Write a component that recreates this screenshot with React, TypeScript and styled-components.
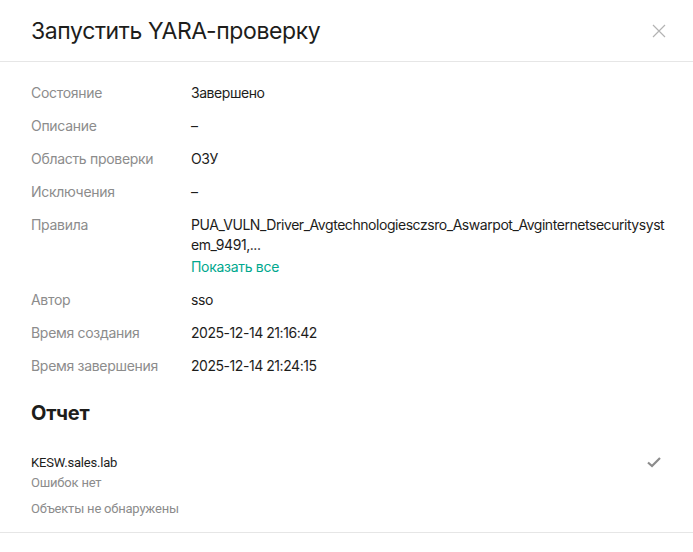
import React from "react";
import styled, { createGlobalStyle } from "styled-components";

const GlobalStyle = createGlobalStyle`
  html, body {
    margin: 0;
    padding: 0;
    background: #fff;
  }
  body {
    font-family: Inter, "Noto Sans", sans-serif;
    color: #1d1d1b;
  }
`;

const Panel = styled.div`
  width: 693px;
  height: 552px;
  background: #fff;
  display: flex;
  flex-direction: column;
  overflow: hidden;
`;

const Header = styled.div`
  height: 62px;
  box-sizing: border-box;
  display: flex;
  align-items: center;
  justify-content: space-between;
  padding: 0 26px 0 31px;
  border-bottom: 1px solid #e6e6e6;
`;

const Title = styled.h1`
  margin: 0;
  font-family: Inter, sans-serif;
  font-weight: 400;
  font-size: 23px;
  letter-spacing: -0.4px;
  color: #1d1d1b;
`;

const CloseButton = styled.button`
  border: 0;
  background: none;
  padding: 0;
  width: 16px;
  height: 16px;
  display: flex;
  cursor: pointer;
`;

const Body = styled.div`
  padding: 21px 28px 0 31px;
  display: flex;
  flex-direction: column;
`;

const Props = styled.div`
  display: grid;
  grid-template-columns: 160px 1fr;
  row-gap: 13px;
  font-size: 14px;
  line-height: 20px;
  letter-spacing: -0.3px;
`;

const Label = styled.div`
  color: #8c8c8c;
`;

const Value = styled.div`
  color: #1d1d1b;
  word-break: break-all;
  letter-spacing: -0.45px;
`;

const Link = styled.a`
  display: block;
  color: #00a88e;
  text-decoration: none;
  margin-top: 2px;
  letter-spacing: -0.3px;
  cursor: pointer;
`;

const SectionTitle = styled.h2`
  margin: 23px 0 0 0;
  font-size: 20px;
  line-height: 28px;
  font-weight: 700;
  letter-spacing: -0.2px;
  color: #1d1d1b;
`;

const Report = styled.div`
  margin-top: 26px;
  display: flex;
  flex-direction: column;
  font-family: Roboto, sans-serif;
  font-size: 13px;
  letter-spacing: -0.2px;
`;

const ReportHead = styled.div`
  display: flex;
  justify-content: space-between;
  align-items: center;
  height: 18px;
  padding-right: 3px;
`;

const Host = styled.div`
  color: #1d1d1b;
`;

const Note = styled.div<{ $gap: number }>`
  color: #8c8c8c;
  margin-top: ${(p) => p.$gap}px;
  line-height: 18px;
`;

const Divider = styled.div`
  margin-top: 14px;
  border-bottom: 1px solid #e6e6e6;
`;

const rows: { label: string; value: string; link?: boolean }[] = [
  { label: "Состояние", value: "Завершено" },
  { label: "Описание", value: "–" },
  { label: "Область проверки", value: "ОЗУ" },
  { label: "Исключения", value: "–" },
  {
    label: "Правила",
    value:
      "PUA_VULN_Driver_Avgtechnologiesczsro_Aswarpot_Avginternetsecuritysystem_9491,...",
    link: true,
  },
  { label: "Автор", value: "sso" },
  { label: "Время создания", value: "2025-12-14 21:16:42" },
  { label: "Время завершения", value: "2025-12-14 21:24:15" },
];

const App = () => {
  return (
    <Panel>
      <GlobalStyle />
      <Header>
        <Title>Запустить YARA-проверку</Title>
        <CloseButton aria-label="Закрыть">
          <svg width="16" height="16" viewBox="0 0 16 16">
            <path d="M2 2L14 14M14 2L2 14" stroke="#b3b3b3" strokeWidth="1.2" />
          </svg>
        </CloseButton>
      </Header>
      <Body>
        <Props>
          {rows.map((row) => (
            <React.Fragment key={row.label}>
              <Label>{row.label}</Label>
              <Value>
                {row.value}
                {row.link && <Link>Показать все</Link>}
              </Value>
            </React.Fragment>
          ))}
        </Props>
        <SectionTitle>Отчет</SectionTitle>
        <Report>
          <ReportHead>
            <Host>KESW.sales.lab</Host>
            <svg width="16" height="14" viewBox="0 0 16 14">
              <path d="M2 7.5L6 11L14 3" stroke="#8c8c8c" strokeWidth="2.2" fill="none" />
            </svg>
          </ReportHead>
          <Note $gap={3}>Ошибок нет</Note>
          <Note $gap={8}>Объекты не обнаружены</Note>
        </Report>
      </Body>
      <Divider />
    </Panel>
  );
};

export default App;
